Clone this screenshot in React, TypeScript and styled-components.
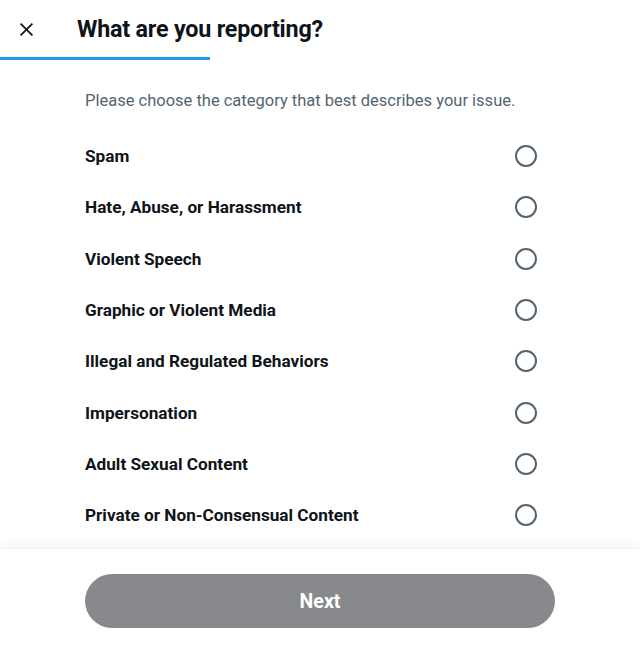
import React from "react";
import styled, { createGlobalStyle } from "styled-components";

const GlobalStyle = createGlobalStyle`
  html, body {
    margin: 0;
    padding: 0;
    background: #ffffff;
  }
  body {
    font-family: Roboto, "Liberation Sans", Arial, sans-serif;
    color: #0f1419;
    -webkit-font-smoothing: antialiased;
  }
`;

const Modal = styled.div`
  width: 640px;
  height: 654px;
  display: flex;
  flex-direction: column;
  background: #ffffff;
  border-top-right-radius: 16px;
  overflow: hidden;
`;

const Header = styled.div`
  height: 57px;
  display: flex;
  align-items: center;
  padding-left: 16px;
`;

const CloseButton = styled.button`
  width: 21px;
  height: 21px;
  padding: 0;
  margin-top: 1px;
  border: none;
  background: none;
  display: flex;
  align-items: center;
  justify-content: center;
  color: #0f1419;
  cursor: pointer;

  svg {
    width: 21px;
    height: 21px;
    fill: currentColor;
  }
`;

const Title = styled.h1`
  margin: 0 0 0 40px;
  font-size: 23.3px;
  font-weight: 700;
  letter-spacing: -0.2px;
  line-height: 28px;
`;

const Progress = styled.div`
  height: 3px;
  width: 210px;
  background: #1d9bf0;
`;

const Hint = styled.p`
  margin: 0;
  padding: 31px 85px 19.5px;
  font-size: 16.5px;
  line-height: 20px;
  color: #536471;
`;

const List = styled.div`
  display: flex;
  flex-direction: column;
  flex: 1;
`;

const Option = styled.label`
  height: 51.3px;
  display: flex;
  align-items: center;
  justify-content: space-between;
  padding: 0 103px 0 85px;
  cursor: pointer;
`;

const OptionText = styled.span`
  font-size: 17.2px;
  font-weight: 700;
  color: #0f1419;
`;

const Radio = styled.span<{ $checked?: boolean }>`
  width: 22px;
  height: 22px;
  box-sizing: border-box;
  border-radius: 50%;
  border: 2px solid ${(p) => (p.$checked ? "#1d9bf0" : "#536471")};
`;

const Footer = styled.div`
  height: 106px;
  box-sizing: border-box;
  padding: 25px 85px 0;
  border-top: 1px solid #eff3f4;
  box-shadow: 0 -6px 8px rgba(101, 119, 134, 0.06);
`;

const NextButton = styled.button`
  width: 100%;
  height: 54px;
  border: none;
  border-radius: 9999px;
  background: #0f1419;
  opacity: 0.5;
  color: #ffffff;
  font-family: inherit;
  font-size: 19.5px;
  font-weight: 700;
  cursor: default;
`;

const categories = [
  "Spam",
  "Hate, Abuse, or Harassment",
  "Violent Speech",
  "Graphic or Violent Media",
  "Illegal and Regulated Behaviors",
  "Impersonation",
  "Adult Sexual Content",
  "Private or Non-Consensual Content",
];

const App: React.FC = () => {
  return (
    <>
      <GlobalStyle />
      <Modal>
        <Header>
          <CloseButton aria-label="Close">
            <svg viewBox="0 0 24 24">
              <path d="M10.59 12L4.54 5.960l1.42-1.42L12 10.59l6.04-6.05 1.42 1.42L13.41 12l6.05 6.04-1.42 1.42L12 13.41l-6.04 6.05-1.42-1.420L10.59 12z" />
            </svg>
          </CloseButton>
          <Title>What are you reporting?</Title>
        </Header>
        <Progress />
        <Hint>Please choose the category that best describes your issue.</Hint>
        <List>
          {categories.map((c) => (
            <Option key={c}>
              <OptionText>{c}</OptionText>
              <Radio />
            </Option>
          ))}
        </List>
        <Footer>
          <NextButton disabled>Next</NextButton>
        </Footer>
      </Modal>
    </>
  );
};

export default App;
